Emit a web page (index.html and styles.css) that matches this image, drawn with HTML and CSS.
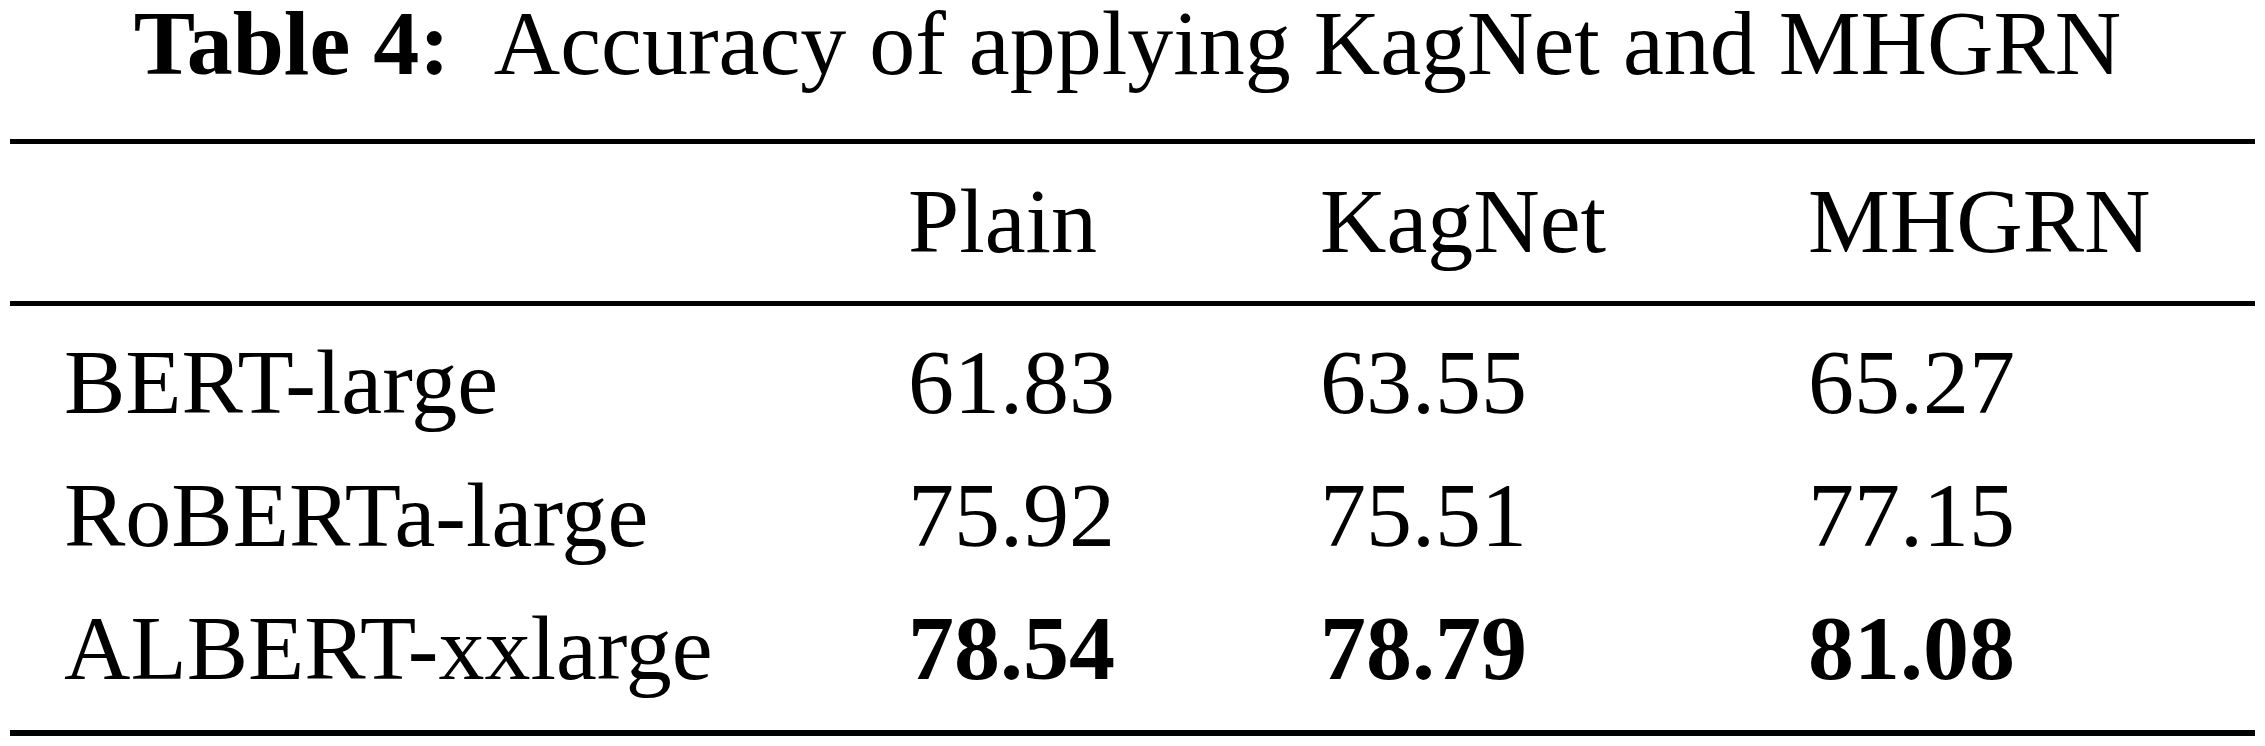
FILE: index.html
```html
<!DOCTYPE html>
<html lang="en">
<head>
	<meta charset="UTF-8" />
	<title>Table 4</title>
	<link rel="stylesheet" href="styles.css">
</head>
<body>
	<div class="wrapper">
		<!-- 标题 -->
		<div class="caption"><span class="caption-label">Table 4:</span> Accuracy of applying KagNet and MHGRN</div>

		<!-- 表格 -->
		<div class="booktab">
			<div class="rule rule-top"></div>
			<div class="row head">
				<span></span>
				<span>Plain</span>
				<span>KagNet</span>
				<span>MHGRN</span>
			</div>
			<div class="rule rule-mid"></div>
			<div class="body">
				<div class="row">
					<span>BERT-large</span>
					<span>61.83</span>
					<span>63.55</span>
					<span>65.27</span>
				</div>
				<div class="row">
					<span>RoBERTa-large</span>
					<span>75.92</span>
					<span>75.51</span>
					<span>77.15</span>
				</div>
				<div class="row">
					<span>ALBERT-xxlarge</span>
					<span class="best">78.54</span>
					<span class="best">78.79</span>
					<span class="best">81.08</span>
				</div>
			</div>
			<div class="rule rule-bottom"></div>
		</div>
	</div>
</body>
</html>
```

FILE: styles.css
```css
html,
body,
div {
	margin: 0;
	padding: 0;
	box-sizing: border-box;
}

body {
	width: 2265px;
	height: 746px;
	background-color: #fff;
	color: #000;
	font-family: "Liberation Serif", "Times New Roman", serif;
	font-size: 92px;
	overflow: hidden;
}

.wrapper {
	padding: 0 10px;
}

/*标题*/
.caption {
	height: 86px;
	line-height: 86px;
	text-align: center;
	white-space: nowrap;
	padding-right: 10px;
}

.caption-label {
	font-weight: bold;
	margin-right: 26px;
}

.booktab {
	margin-top: 53px;
}

/*横线*/
.rule {
	background-color: #000;
	height: 5px;
}

.rule-bottom {
	height: 6px;
}

.row {
	display: grid;
	grid-template-columns: 844px 412px 488px 1fr;
	padding-left: 54px;
	white-space: nowrap;
}

.head {
	line-height: 92px;
	padding-top: 31px;
	padding-bottom: 34px;
}

.body {
	padding-top: 10px;
	padding-bottom: 15px;
}

.body .row {
	line-height: 133px;
}

.best {
	font-weight: bold;
}
```
